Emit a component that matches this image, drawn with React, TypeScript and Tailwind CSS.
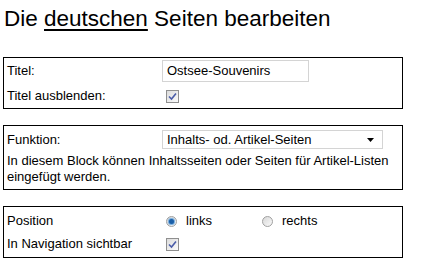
import React from "react";

const Check = () => (
  <span className="inline-flex h-[13px] w-[13px] items-center justify-center border border-[#8f8f8f] bg-gradient-to-br from-[#dcdcdc] to-[#fbfbfb]">
    <svg width="9" height="9" viewBox="0 0 9 9">
      <path d="M1 4.5 L3.5 7 L8 1.5" fill="none" stroke="#4a5ca8" strokeWidth="1.6" />
    </svg>
  </span>
);

const Radio = ({ on }: { on?: boolean }) => (
  <span className="inline-flex h-[11px] w-[11px] items-center justify-center rounded-full border border-[#a0a0a0] bg-gradient-to-br from-[#d8d8d8] to-[#fafafa]">
    {on && <span className="h-[5px] w-[5px] rounded-full bg-[#1b5fa8] shadow-[0_0_1px_1px_#6aa6dc]" />}
  </span>
);

export default function App() {
  return (
    <div className="h-[269px] w-[422px] bg-white text-[13px] leading-[16px] text-black [font-family:'Liberation_Sans',Arial,sans-serif]">
      <h1 className="px-[4px] pt-[6px] text-[22.5px] leading-[26px]">
        Die <span className="underline decoration-2 underline-offset-[3px]">deutschen</span> Seiten bearbeiten
      </h1>
      <div className="ml-[3px] mt-[25px] w-[400px] border border-black px-[3px]">
        <div className="grid h-[26px] grid-cols-[155px_1fr] items-center">
          <span>Titel:</span>
          <div className="flex h-[22px] w-[147px] items-center border border-[#d4d4d4] px-[4px]">Ostsee-Souvenirs</div>
        </div>
        <div className="grid h-[24px] grid-cols-[155px_1fr] items-center">
          <span>Titel ausblenden:</span>
          <div className="flex pl-[4px]"><Check /></div>
        </div>
      </div>
      <div className="ml-[3px] mt-[16px] w-[400px] border border-black px-[3px] pb-[4px] pt-[3px]">
        <div className="grid h-[21px] grid-cols-[155px_1fr] items-center">
          <span>Funktion:</span>
          <div className="flex h-[19px] w-[221px] items-center justify-between border border-[#d4d4d4] pl-[4px] pr-[8px]">
            <span>Inhalts- od. Artikel-Seiten</span>
            <svg width="7" height="4" viewBox="0 0 7 4"><path d="M0 0 H7 L3.5 4 Z" fill="#000" /></svg>
          </div>
        </div>
        <p className="mt-[3px]">In diesem Block können Inhaltsseiten oder Seiten für Artikel-Listen eingefügt werden.</p>
      </div>
      <div className="ml-[3px] mt-[16px] w-[400px] border border-black px-[3px] py-[2px]">
        <div className="grid h-[24px] grid-cols-[155px_100px_1fr] items-center">
          <span>Position</span>
          <div className="flex items-center gap-[9px] pl-[4px]"><Radio on /><span>links</span></div>
          <div className="flex items-center gap-[9px]"><Radio /><span>rechts</span></div>
        </div>
        <div className="grid h-[22px] grid-cols-[155px_1fr] items-center">
          <span>In Navigation sichtbar</span>
          <div className="flex pl-[4px]"><Check /></div>
        </div>
      </div>
    </div>
  );
}
